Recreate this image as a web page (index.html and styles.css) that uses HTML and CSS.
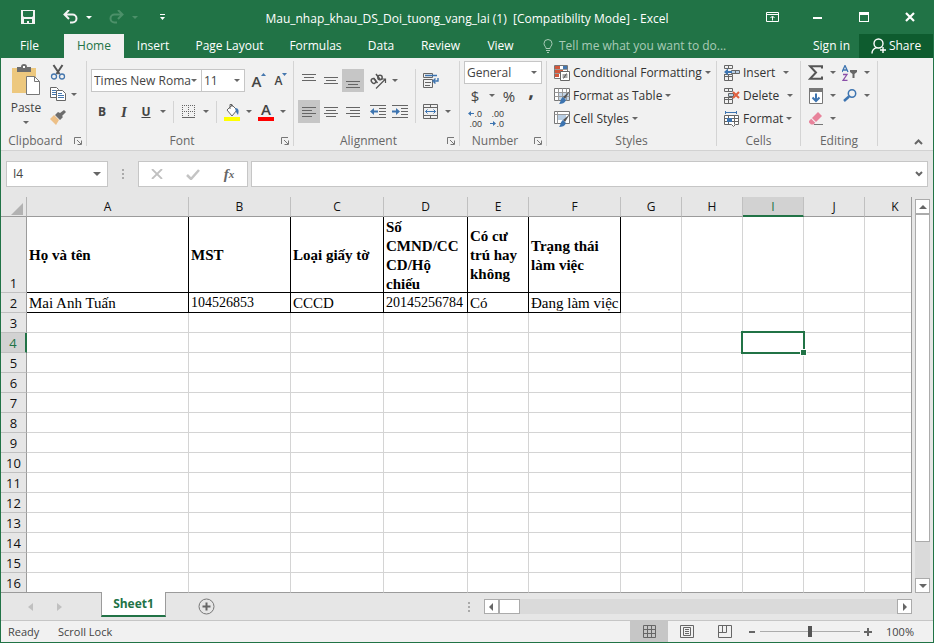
FILE: index.html
```html
<!DOCTYPE html>
<html lang="en">
<head>
<meta charset="utf-8">
<title>Mau_nhap_khau_DS_Doi_tuong_vang_lai (1) - Excel</title>
<link rel="stylesheet" href="styles.css">
</head>
<body>
<div class="window">
  <header class="titlebar">
    <div class="quick">
      <button class="q-save" aria-label="Save"><svg width="14" height="14" viewBox="0 0 14 14"><path d="M0 0h14v14H0z" fill="#f3f3f3"/><path d="M2 1h10v5l-1 1H3L2 6zM3 9h8v4H8v-2H6v2H3z" fill="#217346"/></svg></button>
      <button class="q-undo" aria-label="Undo"><svg width="15" height="14" viewBox="0 0 15 14" fill="none" stroke="#f3f3f3" stroke-width="2"><path d="M6 0L1.500 4.500L6 9M2 4.500h7.500a4 4 0 0 1 0 8H7"/></svg></button>
      <button class="caret light" aria-label="Undo list"></button>
      <button class="q-redo" aria-label="Redo"><svg width="15" height="14" viewBox="0 0 15 14" fill="none" stroke="#4c9069" stroke-width="2"><path d="M9 0l4.500 4.500L9 9M13 4.500H5.500a4 4 0 0 0 0 8H8"/></svg></button>
      <button class="caret faded" aria-label="Redo list"></button>
      <button class="q-more" aria-label="Customize toolbar"><svg width="7" height="6" viewBox="0 0 7 6" fill="#fff"><path d="M1 0h5v1H1zM1 3h5L3.500 6z"/></svg></button>
    </div>
    <h1>Mau_nhap_khau_DS_Doi_tuong_vang_lai (1)&nbsp; [Compatibility Mode] - Excel</h1>
    <div class="win-buttons">
      <button aria-label="Ribbon display options"><svg width="13" height="10" viewBox="0 0 13 10" fill="none" stroke="#fff"><path d="M.5.5h12v9H.5zM.5 2.500h12M6.500 8.500v-4M4.500 6l2-2 2 2"/></svg></button>
      <button aria-label="Minimize"><svg width="10" height="10" viewBox="0 0 10 10"><path d="M0 5h9v2H0z" fill="#fff"/></svg></button>
      <button aria-label="Maximize"><svg width="10" height="10" viewBox="0 0 10 10"><path d="M0 0h10v10H0zM1 3v6h8V3z" fill="#fff" fill-rule="evenodd"/></svg></button>
      <button aria-label="Close"><svg width="10" height="10" viewBox="0 0 10 10"><path d="M1 1l8 8M9 1L1 9" stroke="#fff" stroke-width="2.200"/></svg></button>
    </div>
  </header>

  <div class="tabs">
    <nav class="tab-list">
      <button class="file">File</button><button class="active">Home</button><button>Insert</button><button>Page Layout</button><button>Formulas</button><button>Data</button><button>Review</button><button>View</button>
    </nav>
    <button class="tell"><svg width="10" height="14" viewBox="0 0 10 14" fill="none" stroke="#a9cbb7"><path d="M3 9.500C3 7.500 1 7 1 4.500a4 4 0 0 1 8 0C9 7 7 7.500 7 9.500zM3 11.500h4M4 13.500h2"/></svg>Tell me what you want to do...</button>
    <button class="signin">Sign in</button>
    <button class="share"><svg width="16" height="16" viewBox="0 0 16 16" fill="none" stroke="#fff" stroke-width="1.400"><circle cx="7.500" cy="5.500" r="4.500"/><path d="M1 15.500c0-3 2-5 4.500-5.800M12 9v6M9 12h6"/></svg>Share</button>
  </div>

  <div class="ribbon">
    <section class="group">
      <div class="tools clipboard">
        <div class="paste">
          <button aria-label="Paste icon"><svg width="30" height="32" viewBox="0 0 30 32"><path d="M1 4h24v25H1z" fill="#edc87e"/><path d="M6 3h4a3 3 0 0 1 6 0h4v5H6z" fill="#6d6d6d"/><path d="M12 2h2v2h-2z" fill="#fff"/><path d="M15.500 12.500h8l5 5v13h-13z" fill="#fff" stroke="#777"/><path d="M23.500 12.500v5h5" fill="none" stroke="#777"/></svg></button>
          <button class="paste-text">Paste</button>
          <button class="caret" aria-label="Paste options"></button>
        </div>
        <div class="clip-col">
          <button aria-label="Cut"><svg width="16" height="16" viewBox="0 0 16 16" fill="none"><path d="M3.500 1l6 9M12.500 1l-6 9" stroke="#555" stroke-width="2"/><circle cx="4" cy="12.500" r="2.500" stroke="#4577ae" stroke-width="1.300"/><circle cx="12" cy="12.500" r="2.500" stroke="#4577ae" stroke-width="1.300"/></svg></button>
          <div class="line"><button aria-label="Copy"><svg width="16" height="14" viewBox="0 0 16 14"><path d="M.5.5h6l2 2v8h-8z" fill="#fff" stroke="#666"/><path d="M2 3.500h4M2 5.500h4M2 7.500h4" stroke="#4577ae"/><path d="M6.500 3.500h6l3 3v7h-9z" fill="#fff" stroke="#666"/><path d="M8 6.500h4M8 8.500h6M8 10.500h6" stroke="#4577ae"/></svg></button><button class="caret" aria-label="Copy options"></button></div>
          <button aria-label="Format Painter"><svg width="16" height="15" viewBox="0 0 16 15"><path d="M14 0l2 2-4 4 1 1-3 3-5-5 3-3 2 1z" fill="#6d6d6d"/><path d="M4 5l5 5-3 5-6-6z" fill="#edc087"/></svg></button>
        </div>
      </div>
      <footer>Clipboard<button class="launch" aria-label="Clipboard settings"><svg><use href="#launch"/></svg></button></footer>
    </section>

    <section class="group">
      <div class="tools two-rows font">
        <div class="line">
          <span class="combo face"><select aria-label="Font"><option>Times New Roma</option></select></span>
          <span class="combo size"><select aria-label="Font size"><option>11</option></select></span>
          <button class="b22 grow" aria-label="Increase font size"><b>A</b><svg width="5" height="3" viewBox="0 0 5 3"><path d="M0 3l2.500-3L5 3z" fill="#4577ae"/></svg></button>
          <button class="b22 shrink" aria-label="Decrease font size"><b>A</b><svg width="5" height="3" viewBox="0 0 5 3"><path d="M0 0l2.500 3L5 0z" fill="#4577ae"/></svg></button>
        </div>
        <div class="line">
          <button class="b22 glyph">B</button><button class="b22 glyph italic">I</button><button class="b22 glyph under">U</button><button class="caret" aria-label="Underline options"></button>
          <i class="sep"></i>
          <button class="b22" aria-label="Borders"><svg width="14" height="14" viewBox="0 0 14 14" fill="none" stroke="#666"><path d="M0 .5h13M0 6.500h13M.5 0v12M6.500 0v12M12.500 0v12" stroke-dasharray="1 1"/><path d="M0 12.500h13" stroke-width="1"/></svg></button><button class="caret" aria-label="Border options"></button>
          <i class="sep"></i>
          <button class="b22" aria-label="Fill color"><svg width="16" height="18" viewBox="0 0 16 18"><path d="M3 7l5-5 5 5-5 6z" fill="#fff" stroke="#666"/><path d="M6 6V1.500h2V4" fill="none" stroke="#666"/><path d="M11 5c4 0 4 3 3 7l-2-3z" fill="#4577ae"/><path d="M0 14h16v4H0z" fill="#ff0"/></svg></button><button class="caret" aria-label="Fill options"></button>
          <button class="b22 color" aria-label="Font color"><b>A</b></button><button class="caret" aria-label="Font color options"></button>
        </div>
      </div>
      <footer>Font<button class="launch" aria-label="Font settings"><svg><use href="#launch"/></svg></button></footer>
    </section>

    <section class="group">
      <div class="tools align">
        <div class="align-main">
          <div class="line">
            <button class="b22" aria-label="Top align"><svg width="14" height="14" viewBox="0 0 14 14" stroke="#666"><path d="M0 .5h14M2 3.500h10M0 6.500h14"/></svg></button>
            <button class="b22" aria-label="Middle align"><svg width="14" height="14" viewBox="0 0 14 14" stroke="#666"><path d="M0 3.500h14M2 6.500h10M0 9.500h14"/></svg></button>
            <button class="b22 on" aria-label="Bottom align"><svg width="14" height="14" viewBox="0 0 14 14" stroke="#666"><path d="M0 7.500h14M2 10.500h10M0 13.500h14"/></svg></button>
            <button class="b22 gap" aria-label="Orientation"><svg width="17" height="16" viewBox="0 0 17 16" fill="none" stroke="#555" stroke-width="1.500"><ellipse cx="3.500" cy="8" rx="2" ry="2.500" transform="rotate(-35 3.500 8)"/><path d="M3.500 5l4 5M6 1l4.500 6"/><circle cx="10" cy="4.500" r="2.200"/><path d="M6 15.500l9-9M11.500 6H15.500v4" stroke-width="1.200"/></svg></button><button class="caret" aria-label="Orientation options"></button>
          </div>
          <div class="line">
            <button class="b22 on" aria-label="Align left"><svg width="14" height="12" viewBox="0 0 14 12" stroke="#666"><path d="M0 1.500h14M0 4.500h10M0 7.500h14M0 10.500h10"/></svg></button>
            <button class="b22" aria-label="Center"><svg width="14" height="12" viewBox="0 0 14 12" stroke="#666"><path d="M0 1.500h14M2 4.500h10M0 7.500h14M2 10.500h10"/></svg></button>
            <button class="b22" aria-label="Align right"><svg width="14" height="12" viewBox="0 0 14 12" stroke="#666"><path d="M0 1.500h14M4 4.500h10M0 7.500h14M4 10.500h10"/></svg></button>
            <button class="b22 gap" aria-label="Decrease indent"><svg width="16" height="14" viewBox="0 0 16 14"><path d="M0 .5h16M9 3.500h7M9 6.500h7M9 9.500h7M0 12.500h16" stroke="#666"/><path d="M0 6.500l4-3.500v2.500h4v2H4V10z" fill="#3d74b0"/></svg></button>
            <button class="b22" aria-label="Increase indent"><svg width="16" height="14" viewBox="0 0 16 14"><path d="M0 .5h16M9 3.500h7M9 6.500h7M9 9.500h7M0 12.500h16" stroke="#666"/><path d="M8 6.500L4 3v2.500H0v2h4V10z" fill="#3d74b0"/></svg></button>
          </div>
        </div>
        <i class="sep tall"></i>
        <div class="align-side">
          <button class="b22" aria-label="Wrap text"><svg width="16" height="16" viewBox="0 0 16 16" fill="none" stroke="#666"><path d="M.5.500h9v4h-9zM.5 6.500h9v8h-9zM2 9.500h6M2 12.500h5"/><path d="M2 2.500h12M15 5v3h-4M12.500 5.500L10 8l2.500 2.500" stroke="#3d74b0" stroke-width="1.400"/></svg></button>
          <div class="line"><button class="b22" aria-label="Merge and center"><svg width="16" height="15" viewBox="0 0 16 15" fill="none" stroke="#666"><path d="M.5.500h14v14H.5zM.5 3.500h14M.5 11.500h14M7.500.500v3M7.500 11.500v3"/><path d="M2.500 7.500h10M4.500 5.500l-2 2 2 2M10.500 5.500l2 2-2 2" stroke="#3d74b0"/></svg></button><button class="caret" aria-label="Merge options"></button></div>
        </div>
      </div>
      <footer>Alignment<button class="launch" aria-label="Alignment settings"><svg><use href="#launch"/></svg></button></footer>
    </section>

    <section class="group">
      <div class="tools three-rows number">
        <div class="line"><span class="combo format"><select aria-label="Number format"><option>General</option></select></span></div>
        <div class="line"><button class="b22 big">$</button><button class="caret" aria-label="Currency options"></button><button class="b22 big">%</button><button class="b22 comma">,</button></div>
        <div class="line">
          <button class="b22 dec" aria-label="Increase decimal"><span><svg width="6" height="5" viewBox="0 0 6 5"><path d="M0 2.500L3 0v2h3v1H3v2z" fill="#3d74b0"/></svg>.0</span><span>.00</span></button>
          <button class="b22 dec" aria-label="Decrease decimal"><span>.00</span><span><svg width="6" height="5" viewBox="0 0 6 5"><path d="M6 2.500L3 0v2H0v1h3v2z" fill="#3d74b0"/></svg>.0</span></button>
        </div>
      </div>
      <footer>Number<button class="launch" aria-label="Number settings"><svg><use href="#launch"/></svg></button></footer>
    </section>

    <section class="group">
      <div class="tools three-rows">
        <button class="labeled"><svg width="16" height="16" viewBox="0 0 16 16"><path d="M.5.500h13v13H.5z" fill="#fff" stroke="#777"/><path d="M1 1h5v3H1zM1 5h8v3H1zM1 9h4v3H1z" fill="#d3573a"/><path d="M9 1h4v3H9z" fill="#4577ae"/><path d="M.5 4.500h13M.5 8.500h13" stroke="#999"/><path d="M6.500 6.500h9v9h-9z" fill="#fff" stroke="#666"/><path d="M8.500 10h5M8.500 12h5M12.500 8.500l-3 5" stroke="#555"/></svg>Conditional Formatting<i class="arrow"></i></button>
        <button class="labeled"><svg width="16" height="16" viewBox="0 0 16 16"><path d="M.5.500h15v12H.5z" fill="#fff" stroke="#777"/><path d="M5 4h10v8H5z" fill="#c3d5e8"/><path d="M.5 4.500h15M.5 8.500h15M4.500.500v12M8.500.500v12M12.500.500v12" stroke="#999"/><path d="M16 3l-5 8-2-2z" fill="#555"/><path d="M9 9l3 3c-1 3-4 4-7 4 2-2 1-5 4-7z" fill="#3d74b0"/></svg>Format as Table<i class="arrow"></i></button>
        <button class="labeled"><svg width="16" height="16" viewBox="0 0 16 16"><path d="M.5.500h15v12H.5z" fill="#fff" stroke="#777"/><path d="M4 4h8v5H4z" fill="#b9cfe5"/><path d="M.5 3.500h15M3.500.500v12" stroke="#999"/><path d="M16 3l-5 8-2-2z" fill="#555"/><path d="M9 9l3 3c-1 3-4 4-7 4 2-2 1-5 4-7z" fill="#3d74b0"/></svg>Cell Styles<i class="arrow"></i></button>
      </div>
      <footer>Styles</footer>
    </section>

    <section class="group">
      <div class="tools three-rows cells">
        <button class="labeled"><svg width="16" height="16" viewBox="0 0 16 16" fill="none" stroke="#666"><path d="M.5.500h8v3h-8zM4.500.500v3M.5 11.500h8v4h-8zM4.500 9v6M.5 9.500h8v2M.5 9v3"/><path d="M7.500 5.500h8v3h-8zM11.500 5.500v3" fill="#b9cfe5"/><path d="M0 7l4-3.500V6h4v2H4v2.500z" fill="#3d74b0" stroke="none"/></svg><span>Insert</span><i class="arrow"></i></button>
        <button class="labeled"><svg width="16" height="16" viewBox="0 0 16 16" fill="none" stroke="#666"><path d="M.5.500h8v3h-8zM4.500.500v3M.5 11.500h8v4h-8zM4.500 9v6M.5 9.500h8v2M.5 9v3"/><path d="M4.500 5.500h5v3h-5z" fill="#b9cfe5"/><path d="M9 4l6 6M15 4l-6 6" stroke="#e0603f" stroke-width="2"/></svg><span>Delete</span><i class="arrow"></i></button>
        <button class="labeled"><svg width="16" height="16" viewBox="0 0 16 16" fill="none" stroke="#666"><path d="M.5 4.500h14v9h-3l-2 2-2-2h-7zM.5 7.500h14M.5 10.500h14M4.500 4.500v9M10.500 4.500v9" fill="#fff"/><path d="M3 7h5v4H3z" fill="#3d74b0" stroke="none"/><path d="M1.500 0v3M12.500 0v3M2 1.500h10" stroke="#3d74b0"/></svg><span>Format</span><i class="arrow"></i></button>
      </div>
      <footer>Cells</footer>
    </section>

    <section class="group">
      <div class="tools three-rows editing">
        <div class="line">
          <button class="b22" aria-label="AutoSum"><svg width="16" height="15" viewBox="0 0 16 15" fill="none"><path d="M14 3.500V1.200H2l6 6.300-6 6.300h12v-2.300" stroke="#555" stroke-width="2"/></svg></button><button class="caret" aria-label="Sum options"></button>
          <button class="b22" aria-label="Sort and filter"><svg width="16" height="16" viewBox="0 0 16 16" fill="none"><path d="M0 7l3-6.500L6 7M1.500 5h3" stroke="#3d74b0" stroke-width="1.300"/><path d="M1 9.500h4l-4 6h4.500" stroke="#8a4fa8" stroke-width="1.300"/><path d="M8 5h7v2l-2.500 2v4h-2V9L8 7z" fill="#666"/></svg></button><button class="caret" aria-label="Sort options"></button>
        </div>
        <div class="line">
          <button class="b22" aria-label="Fill"><svg width="14" height="16" viewBox="0 0 14 16"><path d="M.5.500h13v15H.5z" fill="#fff" stroke="#777"/><path d="M0 0h14v4H0z" fill="#777"/><path d="M7 5.500v7M3.500 9.500L7 13l3.500-3.500" fill="none" stroke="#3d74b0" stroke-width="2"/></svg></button><button class="caret" aria-label="Fill list"></button>
          <button class="b22" aria-label="Find and select"><svg width="14" height="13" viewBox="0 0 14 13" fill="none" stroke="#3d74b0"><circle cx="9" cy="4.500" r="3.700" stroke-width="1.500"/><path d="M6 7.500L1 12" stroke-width="2.500"/></svg></button><button class="caret" aria-label="Find options"></button>
        </div>
        <div class="line">
          <button class="b22" aria-label="Clear"><svg width="14" height="14" viewBox="0 0 14 14"><path d="M9 0l4 4-6 6-4-4z" fill="#e8839b"/><path d="M2.200 6.800l4 4-1.700 1.700H2L0 10.500V9z" fill="#e8839b"/><path d="M5 12.500h9" stroke="#777"/></svg></button><button class="caret" aria-label="Clear options"></button>
        </div>
      </div>
      <footer>Editing</footer>
    </section>
    <button class="collapse" aria-label="Collapse ribbon"><svg width="9" height="6" viewBox="0 0 9 6"><path d="M1 5l3.500-3.500L8 5" fill="none" stroke="#666" stroke-width="2"/></svg></button>
  </div>

  <div class="formula-bar">
    <div class="name-box"><input aria-label="Name box" value="I4"><button class="caret" aria-label="Names"></button></div>
    <i class="dots"></i>
    <div class="fx">
      <button aria-label="Cancel"><svg width="12" height="10" viewBox="0 0 12 10"><path d="M1 0l10 10M11 0L1 10" stroke="#c0c0c0" stroke-width="1.800"/></svg></button>
      <button aria-label="Enter"><svg width="14" height="11" viewBox="0 0 14 11"><path d="M1 6l4 4 8-9" fill="none" stroke="#c4c4c4" stroke-width="2.500"/></svg></button>
      <button class="fx-sign">f<sub>x</sub></button>
    </div>
    <div class="formula"><input aria-label="Formula"><button aria-label="Expand formula bar"><svg width="8" height="6" viewBox="0 0 8 6"><path d="M1 1l3 3 3-3" fill="none" stroke="#666" stroke-width="2"/></svg></button></div>
  </div>

  <main class="sheet">
    <div class="grid">
      <table>
        <colgroup><col class="c-head"><col class="c-a"><col class="c-b"><col class="c-c"><col class="c-d"><col class="c-e"><col class="c-f"><col class="c-n"><col class="c-n"><col class="c-n"><col class="c-n"><col class="c-n"></colgroup>
        <thead><tr><td class="corner"><svg width="12" height="12" viewBox="0 0 12 12"><path d="M12 0v12H0z" fill="#b2b2b2"/></svg></td><th>A</th><th>B</th><th>C</th><th>D</th><th>E</th><th>F</th><th>G</th><th>H</th><th class="picked">I</th><th>J</th><th>K</th></tr></thead>
        <tbody>
          <tr class="titles"><th>1</th><td><div>Họ và tên</div></td><td><div>MST</div></td><td><div>Loại giấy tờ</div></td><td><div>Số<br>CMND/CC<br>CD/Hộ<br>chiếu</div></td><td><div>Có cư<br>trú hay<br>không</div></td><td><div>Trạng thái<br>làm việc</div></td><td></td><td></td><td></td><td></td><td></td></tr>
          <tr class="record"><th>2</th><td>Mai Anh Tuấn</td><td class="num">104526853</td><td>CCCD</td><td class="num">20145256784</td><td>Có</td><td>Đang làm việc</td><td></td><td></td><td></td><td></td><td></td></tr>
          <tr><th>3</th><td></td><td></td><td></td><td></td><td></td><td></td><td></td><td></td><td></td><td></td><td></td></tr>
          <tr><th class="picked">4</th><td></td><td></td><td></td><td></td><td></td><td></td><td></td><td></td><td class="active-cell"><i></i></td><td></td><td></td></tr>
          <tr><th>5</th><td></td><td></td><td></td><td></td><td></td><td></td><td></td><td></td><td></td><td></td><td></td></tr>
          <tr><th>6</th><td></td><td></td><td></td><td></td><td></td><td></td><td></td><td></td><td></td><td></td><td></td></tr>
          <tr><th>7</th><td></td><td></td><td></td><td></td><td></td><td></td><td></td><td></td><td></td><td></td><td></td></tr>
          <tr><th>8</th><td></td><td></td><td></td><td></td><td></td><td></td><td></td><td></td><td></td><td></td><td></td></tr>
          <tr><th>9</th><td></td><td></td><td></td><td></td><td></td><td></td><td></td><td></td><td></td><td></td><td></td></tr>
          <tr><th>10</th><td></td><td></td><td></td><td></td><td></td><td></td><td></td><td></td><td></td><td></td><td></td></tr>
          <tr><th>11</th><td></td><td></td><td></td><td></td><td></td><td></td><td></td><td></td><td></td><td></td><td></td></tr>
          <tr><th>12</th><td></td><td></td><td></td><td></td><td></td><td></td><td></td><td></td><td></td><td></td><td></td></tr>
          <tr><th>13</th><td></td><td></td><td></td><td></td><td></td><td></td><td></td><td></td><td></td><td></td><td></td></tr>
          <tr><th>14</th><td></td><td></td><td></td><td></td><td></td><td></td><td></td><td></td><td></td><td></td><td></td></tr>
          <tr><th>15</th><td></td><td></td><td></td><td></td><td></td><td></td><td></td><td></td><td></td><td></td><td></td></tr>
          <tr class="last"><th>16</th><td></td><td></td><td></td><td></td><td></td><td></td><td></td><td></td><td></td><td></td><td></td></tr>
        </tbody>
      </table>
    </div>
    <div class="vscroll">
      <button class="scroll-btn up" aria-label="Scroll up"></button>
      <div class="track"><div class="thumb"></div></div>
      <button class="scroll-btn down" aria-label="Scroll down"></button>
    </div>
  </main>

  <div class="sheet-bar">
    <div class="sheet-nav"><button class="tri left" aria-label="Previous sheet"></button><button class="tri right" aria-label="Next sheet"></button></div>
    <button class="sheet-tab">Sheet1</button>
    <button class="add" aria-label="New sheet"><svg width="17" height="17" viewBox="0 0 17 17" fill="none" stroke="#777"><circle cx="8.500" cy="8.500" r="7.500"/><path d="M8.500 4.500v8M4.500 8.500h8" stroke="#666" stroke-width="2"/></svg></button>
    <i class="dots"></i>
    <div class="hscroll">
      <button class="scroll-btn left" aria-label="Scroll left"></button>
      <div class="track"><div class="thumb"></div></div>
      <button class="scroll-btn right" aria-label="Scroll right"></button>
    </div>
  </div>

  <footer class="status">
    <span class="ready">Ready</span><span class="lock">Scroll Lock</span>
    <div class="views">
      <button class="on" aria-label="Normal view"><svg width="13" height="13" viewBox="0 0 13 13" fill="none" stroke="#666"><path d="M.5.500h12v12H.5zM.5 4.500h12M.5 8.500h12M4.500.500v12M8.500.500v12"/></svg></button>
      <button aria-label="Page layout view"><svg width="14" height="13" viewBox="0 0 14 13" fill="none" stroke="#666"><path d="M.5.500h13v12H.5zM3.500 2.500h7v8h-7zM5 4.500h4M5 6.500h4M5 8.500h4"/></svg></button>
      <button aria-label="Page break view"><svg width="14" height="13" viewBox="0 0 14 13" fill="none" stroke="#666"><path d="M.5.500h13v12H.5zM.5 7.500h8v-7M4.500.500v7"/></svg></button>
    </div>
    <div class="zoom">
      <button aria-label="Zoom out"><svg width="8" height="8" viewBox="0 0 8 8"><path d="M1 3h6v2H1z" fill="#666"/></svg></button>
      <input type="range" min="0" max="100" value="50" aria-label="Zoom">
      <button aria-label="Zoom in"><svg width="8" height="8" viewBox="0 0 8 8"><path d="M3 0h2v3h3v2H5v3H3V5H0V3h3z" fill="#666"/></svg></button>
      <button class="percent">100%</button>
    </div>
  </footer>
</div>
<svg class="defs" width="0" height="0" aria-hidden="true"><symbol id="launch" viewBox="0 0 8 8"><path d="M.5 7V.5H7M3 3l4 4M7.500 3.500v4h-4" fill="none" stroke="#777"/></symbol></svg>
</body>
</html>
```
FILE: styles.css
```css
* { box-sizing: border-box; }

body {
  margin: 0;
  font: 12px/16px "Open Sans", "Noto Sans", sans-serif;
  color: #444;
}

button, input, select {
  font: inherit;
  color: inherit;
  background: none;
  border: 0;
  padding: 0;
  margin: 0;
}

button {
  display: inline-flex;
  align-items: center;
  justify-content: center;
  white-space: nowrap;
  flex: none;
}

svg { display: block; flex: none; }
.defs { position: absolute; }

.window {
  min-height: 100vh;
  display: flex;
  flex-direction: column;
  background: #e6e6e6;
  border: solid #217346;
  border-width: 0 1px 1px;
  overflow: hidden;
}

/* Title bar */
.titlebar {
  height: 34px;
  display: grid;
  grid-template-columns: 1fr auto 1fr;
  align-items: center;
  background: #217346;
  color: #fff;
}
.titlebar h1 { margin: 4px 0 0; font-size: 12px; font-weight: 400; line-height: 16px; }
.quick { display: flex; align-items: center; padding-left: 20px; }
.q-undo { margin-left: 28px; }
.q-redo { margin-left: 14px; }
.q-more { margin-left: 18px; }
.win-buttons { display: flex; justify-content: flex-end; }
.win-buttons button { width: 46px; height: 32px; }

.caret { width: 12px; height: 22px; }
.caret::before, .arrow, .combo::after {
  content: "";
  border: solid transparent;
  border-width: 3px 3px 0;
  border-top-color: #666;
}
.caret.light, .caret.faded { margin-left: 5px; }
.caret.light::before { border-top-color: #fff; }
.caret.faded::before { border-top-color: #4c9069; }

/* Ribbon tabs */
.tabs { height: 24px; display: flex; background: #217346; color: #fff; }
.tab-list { display: grid; grid-template-columns: 63px 60px 58px 95px 77px 54px 65px 55px; flex: none; }
.tab-list .active { background: #f1f1f1; color: #217346; }
.file { padding-right: 6px; }
.tell { margin: 0 auto 0 15px; gap: 6px; color: #a9cbb7; }
.signin { padding: 0 9px; }
.share { width: 74px; gap: 2px; background: #0e5c2f; }

/* Ribbon */
.ribbon {
  height: 93px;
  display: grid;
  grid-template-columns: 86px 207px 166px 87px 170px 84px 77px 1fr;
  background: #f1f1f1;
  border-bottom: 1px solid #d2d2d2;
  padding: 3px 0 4px;
}
.group { border-right: 1px solid #d4d4d4; display: flex; flex-direction: column; height: 85px; }
.group footer { position: relative; text-align: center; color: #666; margin-top: auto; padding-right: 16px; line-height: 10px; }
.group footer:not(:has(button)) { padding-right: 0; }
.launch { position: absolute; right: 4px; top: 1px; }
.launch svg { width: 8px; height: 8px; }
.line { display: flex; align-items: center; height: 23px; }
.b22 { width: 22px; height: 23px; }
.on { background: #c6c6c6; }
.sep { width: 1px; height: 22px; background: #d4d4d4; margin: 0 4px; }
.tools { padding: 0 4px; }
.two-rows { padding-top: 8px; display: grid; gap: 8px; }
.three-rows { display: grid; grid-template-rows: 23px 23px 23px; }

.clipboard { display: flex; padding: 3px 0 0 9px; }
.paste { width: 32px; display: flex; flex-direction: column; align-items: center; }
.paste-text { margin: 4px 0 0; }
.paste .caret { height: 12px; }
.clip-col { display: flex; flex-direction: column; align-items: flex-start; padding-left: 8px; }
.clip-col .line { height: 28px; }
.clip-col .caret { margin-left: 2px; }
.clip-col > button:last-child { margin-top: 2px; }

.combo { position: relative; display: block; height: 23px; background: #fff; border: 1px solid #c6c6c6; }
.combo select { appearance: none; width: 100%; height: 100%; padding: 0 2px; }
.combo::after { position: absolute; right: 4px; top: 9px; }
.face { width: 111px; }
.size { width: 43px; margin: 0 3px 0 0; border-left: 0; }
.format { width: 78px; }
.grow b { font-size: 15px; font-weight: 600; }
.shrink b { font-size: 12px; font-weight: 600; }
.grow svg, .shrink svg { margin-bottom: 12px; }
.glyph { font-weight: 700; }
.italic { font-style: italic; font-family: "Liberation Serif", serif; font-size: 15px; }
.under { text-decoration: underline; }
.color b { width: 16px; font-size: 15px; line-height: 15px; font-weight: 600; border-bottom: 4px solid #f00; }

.align { display: flex; padding-top: 8px; }
.align-main, .align-side { display: grid; gap: 8px; align-content: start; }
.gap { margin-left: 3px; }
.sep.tall { height: 54px; margin: 0 4px; }

.big { font-size: 15px; }
.comma { font-size: 20px; font-weight: 700; padding-bottom: 12px; }
.dec { flex-direction: column; align-items: flex-end; font: 9px/10px "Liberation Sans", sans-serif; padding-right: 4px; }
.dec span { display: flex; align-items: center; }

.labeled { justify-content: flex-start; gap: 3px; padding-left: 3px; height: 23px; color: #333; }
.cells .arrow { margin-left: 5px; }
.cells .labeled:last-child .arrow { margin-left: 0; }
.collapse { place-self: end; margin: 0 10px 1px 0; }

/* Formula bar */
.formula-bar { display: flex; align-items: center; padding: 10px 5px; height: 46px; }
.name-box, .fx, .formula { display: flex; align-items: center; height: 26px; background: #fff; border: 1px solid #c6c6c6; }
.name-box { width: 102px; }
.name-box input { flex: 1; min-width: 0; padding-left: 6px; }
.name-box .caret { width: 20px; }
.name-box .caret::before { border-width: 4px 4px 0; }
.dots { width: 2px; height: 10px; margin: 0 14px; background: repeating-linear-gradient(#aaa 0 2px, transparent 2px 4px); }
.fx { width: 110px; justify-content: space-around; }
.fx button { width: 36px; height: 24px; }
.fx .fx-sign { font: italic 700 15px/16px "Liberation Serif", serif; color: #666; }
.fx-sign sub { font-size: 11px; vertical-align: baseline; }
.formula { flex: 1; margin-left: 3px; }
.formula input { flex: 1; min-width: 0; }
.formula button { width: 16px; }

/* Worksheet */
.sheet { display: flex; flex: 1; }
.grid { flex: 1; min-width: 0; overflow: hidden; background: #fff; border-right: 1px solid #9b9b9b; }
.grid table { table-layout: fixed; width: 925px; border-collapse: separate; border-spacing: 0; }
.c-head { width: 26px; }
.c-a { width: 162px; }
.c-b { width: 102px; }
.c-c { width: 93px; }
.c-d { width: 84px; }
.c-e { width: 61px; }
.c-f { width: 92px; }
.c-n { width: 61px; }
.grid tr { height: 20px; }
.grid td { padding: 0 2px; border: solid #d4d4d4; border-width: 0 1px 1px 0; }
.grid th { padding: 0; font-size: 13px; line-height: 18px; font-weight: 400; color: #111; background: #e6e6e6; border: solid #c0c0c0; border-width: 0 1px 1px 0; }
.grid thead th { font-size: 12px; }
.grid thead th, .grid .corner { border-bottom-color: #9b9b9b; background: #e6e6e6; }
.grid tbody th { border-right-color: #9b9b9b; vertical-align: bottom; }
.grid .corner { border-right-color: #b4b4b4; }
.corner svg { margin: 4px 0 0 8px; }
.grid .picked { background: #d2d2d2; color: #217346; }
.grid thead .picked { border-bottom: 2px solid #217346; line-height: 17px; background: #d2d2d2; }
.grid tbody .picked { border-right: 2px solid #217346; }
.grid .last > * { border-bottom-color: #9b9b9b; }
.titles td, .record td { font-family: "Liberation Serif", serif; font-size: 15px; line-height: 19px; color: #000; white-space: nowrap; }
.titles div { height: 75px; padding-top: 2px; display: flex; align-items: center; font-weight: 700; }
.grid .record td { line-height: 18px; padding-top: 1px; }
.grid .record .num { font-size: 14px; }
.grid .titles td:nth-child(-n+7), .grid .record td:nth-child(-n+7) { border-color: #000; }
.active-cell { position: relative; }
.active-cell::after { content: ""; position: absolute; inset: -2px; border: 2px solid #217346; }
.active-cell i { position: absolute; right: -4px; bottom: -4px; z-index: 1; width: 7px; height: 7px; background: #217346; border: 1px solid #fff; }

.scroll-btn { width: 15px; height: 15px; background: #fff; border: 1px solid #ababab; }
.scroll-btn::before { content: ""; border: 4px solid transparent; }
.scroll-btn.up::before { border-top: 0; border-bottom-color: #666; }
.scroll-btn.down::before { border-bottom: 0; border-top-color: #666; }
.scroll-btn.left::before { border-left: 0; border-right-color: #666; }
.scroll-btn.right::before { border-right: 0; border-left-color: #666; }
.track { background: #dadada; flex: 1; }
.thumb { background: #fff; border: 1px solid #ababab; }
.vscroll { display: flex; flex-direction: column; padding: 2px 3px 0; }
.vscroll .thumb { height: 90%; }

/* Sheet tabs */
.sheet-bar { display: flex; align-items: center; height: 27px; padding-right: 21px; }
.sheet-nav { width: 100px; display: flex; gap: 24px; padding-left: 27px; }
.tri::before { content: ""; border: 4px solid transparent; }
.tri.left::before { border-left: 0; border-right: 5px solid #c0c0c0; }
.tri.right::before { border-right: 0; border-left: 5px solid #c0c0c0; }
.sheet-tab { align-self: flex-start; position: relative; width: 65px; height: 25px; margin-top: -1px; background: #fff; color: #217346; font-weight: 700; border: solid #9b9b9b; border-width: 0 1px; border-bottom: 2px solid #217346; }
.add { margin: 0 auto 0 32px; }
.hscroll { display: flex; width: 47%; height: 15px; }
.hscroll .thumb { width: 21px; height: 15px; }

/* Status bar */
.status { display: flex; align-items: center; height: 22px; background: #f1f1f1; border-top: 1px solid #c6c6c6; font-size: 11px; padding-right: 19px; }
.ready { width: 50px; padding-left: 7px; }
.lock { padding-left: 7px; }
.views { display: flex; margin-left: auto; }
.views button { width: 38px; height: 21px; }
.zoom { display: flex; align-items: center; margin-left: 4px; }
.zoom input { appearance: none; width: 100px; height: 12px; margin: 0 4px; background: linear-gradient(#ababab, #ababab) center / 100% 1px no-repeat; }
.zoom input::-webkit-slider-thumb { appearance: none; width: 4px; height: 11px; background: #555; }
.percent { margin-left: 14px; }
```
